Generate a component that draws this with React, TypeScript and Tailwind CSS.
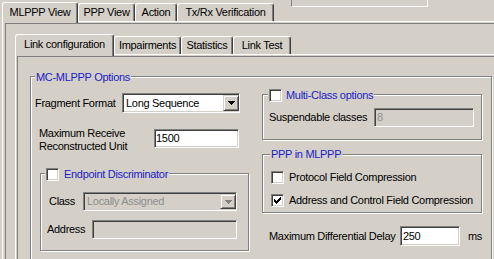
import type { ReactNode } from "react"

const sunken =
  "border border-t-[#808080] border-l-[#808080] border-r-white border-b-white shadow-[inset_1px_1px_0_#404040,inset_-1px_-1px_0_#d4d0c8]"

const etched = "relative border border-[#808080] shadow-[inset_1px_1px_0_#fff,1px_1px_0_#fff]"

function Tab({ label, selected, className }: { label: string; selected?: boolean; className: string }) {
  const base =
    "flex items-center justify-center whitespace-nowrap rounded-t-[3px] border-l border-t border-r border-l-white border-t-white border-r-[#404040] bg-[#d4d0c8] shadow-[inset_-1px_0_0_#808080]"
  return <div className={`${base} ${selected ? "relative z-10 -mb-[2px] pb-[2px]" : ""} ${className}`}>{label}</div>
}

function Checkbox({ checked }: { checked?: boolean }) {
  return (
    <div className={`flex h-[13px] w-[13px] shrink-0 items-center justify-center bg-white ${sunken}`}>
      {checked && (
        <svg width="7" height="7" viewBox="0 0 7 7" shapeRendering="crispEdges">
          <path
            fill="#000"
            d="M6 0h1v1h-1z M5 1h2v1h-2z M0 2h1v1h-1z M4 2h3v1h-3z M0 3h2v1h-2z M3 3h3v1h-3z M0 4h5v1h-5z M1 5h3v1h-3z M2 6h1v1h-1z"
          />
        </svg>
      )}
    </div>
  )
}

function Arrow({ disabled }: { disabled?: boolean }) {
  return (
    <div className="flex h-full w-[16px] shrink-0 items-center justify-center border border-t-[#d4d0c8] border-l-[#d4d0c8] border-r-[#404040] border-b-[#404040] bg-[#d4d0c8] shadow-[inset_1px_1px_0_#fff,inset_-1px_-1px_0_#808080]">
      <svg width="7" height="4" viewBox="0 0 7 4" shapeRendering="crispEdges">
        <path d="M0 0h7l-3.5 4z" fill={disabled ? "#808080" : "#000"} />
      </svg>
    </div>
  )
}

function Group({ legend, className, children }: { legend: ReactNode; className: string; children?: ReactNode }) {
  return (
    <div className={`${etched} ${className}`}>
      {legend}
      {children}
    </div>
  )
}

export default function App() {
  return (
    <div className="h-[259px] w-[494px] overflow-hidden bg-[#d4d0c8] font-['Liberation_Sans',Arial,sans-serif] text-[11px] leading-[13px] tracking-[-0.3px] text-black">
      {/* outer tabs */}
      <div className="flex h-[21px] items-end pl-[2px]">
        <Tab label="MLPPP View" selected className="h-[21px] w-[76px]" />
        <Tab label="PPP View" className="h-[18px] w-[57px]" />
        <Tab label="Action" className="h-[18px] w-[42px]" />
        <Tab label="Tx/Rx Verification" className="h-[18px] w-[97px]" />
        <div className="ml-[17px] h-[7px] w-[137px] self-start border-l border-r border-b border-l-[#808080] border-r-white border-b-white" />
      </div>

      {/* outer panel */}
      <div className="ml-[2px] h-[238px] border-l border-t border-white pl-[2px] pt-[1px]">
        <div className="h-full border-l border-t border-[#808080] pl-[9px] pt-[10px]">
          {/* inner tabs */}
          <div className="flex h-[20px] items-end">
            <Tab label="Link configuration" selected className="h-[22px] w-[99px]" />
            <Tab label="Impairments" className="h-[18px] w-[67px]" />
            <Tab label="Statistics" className="h-[18px] w-[52px]" />
            <Tab label="Link Test" className="h-[18px] w-[58px]" />
          </div>

          {/* inner panel */}
          <div className="h-[220px] border-l border-t border-white pl-[1px] pt-[1px]">
            <div className="h-full border-l border-t border-[#808080] pl-[12px] pt-[19px]">
              <Group
                className="h-[200px] w-[462px]"
                legend={
                  <span className="absolute -top-[6px] left-[4px] bg-[#d4d0c8] px-[1px] text-[#2020c8]">
                    MC-MLPPP Options
                  </span>
                }
              >
                <div className="flex">
                  {/* left column */}
                  <div className="w-[231px]">
                    <div className="mt-[16px] flex h-[20px] items-center">
                      <div className="w-[91px] pl-[4px] pt-[1px]">Fragment Format</div>
                      <div className={`flex h-[20px] w-[118px] items-center bg-white ${sunken}`}>
                        <div className="flex-1 pl-[3px]">Long Sequence</div>
                        <div className="h-[16px] p-0">
                          <Arrow />
                        </div>
                      </div>
                    </div>

                    <div className="mt-[14px] flex items-start">
                      <div className="w-[123px] pl-[8px]">
                        Maximum Receive
                        <br />
                        Reconstructed Unit
                      </div>
                      <div className={`mt-[2px] flex h-[19px] w-[85px] items-center bg-white pl-[1px] ${sunken}`}>1500</div>
                    </div>

                    <Group
                      className="ml-[9px] mt-[20px] h-[78px] w-[209px]"
                      legend={
                        <div className="absolute -top-[6px] left-[4px] flex h-[13px] items-center gap-[5px] bg-[#d4d0c8] px-[1px] text-[#2020c8]">
                          <Checkbox />
                          <span>Endpoint Discriminator</span>
                        </div>
                      }
                    >
                      <div className="mt-[18px] flex h-[19px] items-center">
                        <div className="w-[42px] pl-[8px]">Class</div>
                        <div className={`flex h-[19px] w-[154px] items-center bg-[#d4d0c8] ${sunken}`}>
                          <div className="flex-1 pl-[3px] text-[#8e8e8e]">Locally Assigned</div>
                          <div className="h-[15px]">
                            <Arrow disabled />
                          </div>
                        </div>
                      </div>
                      <div className="mt-[9px] flex h-[19px] items-center">
                        <div className="w-[51px] pl-[6px]">Address</div>
                        <div className={`h-[19px] w-[145px] bg-[#d4d0c8] ${sunken}`} />
                      </div>
                    </Group>
                  </div>

                  {/* right column */}
                  <div className="w-[220px]">
                    <Group
                      className="mt-[17px] h-[46px] w-[220px]"
                      legend={
                        <div className="absolute -top-[6px] left-[5px] flex h-[13px] items-center gap-[4px] bg-[#d4d0c8] px-[1px] text-[#2020c8]">
                          <Checkbox />
                          <span>Multi-Class options</span>
                        </div>
                      }
                    >
                      <div className="mt-[13px] flex h-[19px] items-center">
                        <div className="w-[111px] pl-[6px]">Suspendable classes</div>
                        <div className={`flex h-[19px] w-[100px] items-center bg-[#d4d0c8] pl-[2px] text-[#8e8e8e] ${sunken}`}>
                          8
                        </div>
                      </div>
                    </Group>

                    <Group
                      className="mt-[14px] h-[59px] w-[220px]"
                      legend={
                        <span className="absolute -top-[7px] left-[7px] bg-[#d4d0c8] px-[1px] text-[#2020c8]">
                          PPP in MLPPP
                        </span>
                      }
                    >
                      <div className="mt-[16px] flex items-center gap-[5px] pl-[8px]">
                        <Checkbox />
                        <span>Protocol Field Compression</span>
                      </div>
                      <div className="mt-[10px] flex items-center gap-[5px] pl-[8px]">
                        <Checkbox checked />
                        <span>Address and Control Field Compression</span>
                      </div>
                    </Group>

                    <div className="mt-[13px] flex h-[20px] items-center whitespace-nowrap">
                      <div className="w-[141px] pl-[7px]">Maximum Differential Delay</div>
                      <div className={`flex h-[20px] w-[60px] shrink-0 items-center bg-white pl-[2px] ${sunken}`}>250</div>
                      <div className="ml-[8px]">ms</div>
                    </div>
                  </div>
                </div>
              </Group>
            </div>
          </div>
        </div>
      </div>
    </div>
  )
}
